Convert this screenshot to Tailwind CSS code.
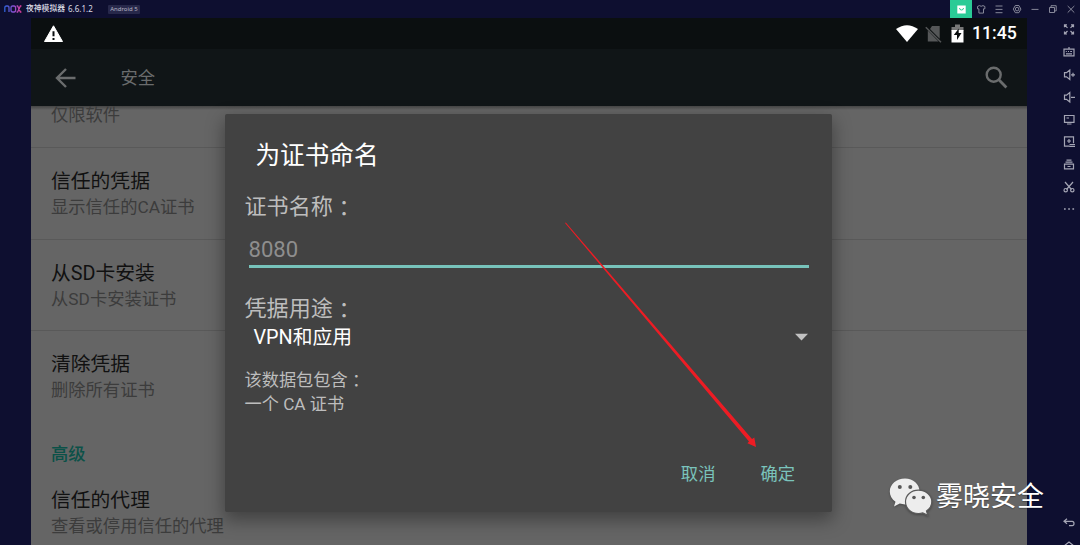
<!DOCTYPE html>
<html lang="zh-CN">
<head>
<meta charset="utf-8">
<title>安全</title>
<script src="https://cdn.jsdelivr.net/npm/@tailwindcss/browser@4"></script>
</head>
<body class="relative flex h-[545px] w-[1080px] flex-col overflow-hidden bg-[#0e0f30] font-['Roboto','Noto_Sans_CJK_SC',sans-serif]">
<header class="flex h-[18px] shrink-0 items-center text-[#9394a4]">
  <svg class="ml-[4px] h-[8px] w-[18px]" viewBox="0 0 18 8" fill="none" stroke-width="1.3"><defs><linearGradient id="n" gradientUnits="userSpaceOnUse" x1="0" y1="0" x2="18" y2="0"><stop stop-color="#2862d8"/><stop offset=".55" stop-color="#8a4fd0"/><stop offset="1" stop-color="#e83a92"/></linearGradient></defs><path stroke="url(#n)" d="M.8 7V3Q.8 1 2.500 1h1Q5 1 5 3v4M8.700 1h1.300Q11.600 1 11.600 3v2q0 2-1.600 2H8.700Q7 7 7 5V3q0-2 1.700-2zM12.600 1h1l2.800 6h1M17.400 1h-1l-2.800 6h-1"/></svg>
  <span class="ml-[4px] w-[39px] text-[7.8px] leading-[18px] font-medium whitespace-nowrap text-[#dcdce5]">夜神模拟器</span>
  <span class="ml-[3px] w-[24px] font-['Noto_Sans'] text-[8px] leading-[18px] whitespace-nowrap text-[#dcdce5]">6.6.1.2</span>
  <span class="ml-[16px] h-[9px] w-[32px] rounded-[1px] bg-[#27284a] text-center font-['Noto_Sans'] text-[6px] leading-[9px] whitespace-nowrap text-[#b5b5c5]">Android 5</span>
  <div class="ml-auto flex h-full items-center">
    <div class="flex h-full w-[22px] items-center justify-center bg-[#2acb96]"><svg class="h-[9px] w-[9px]" viewBox="0 0 9 9"><path fill="#fff" d="M.3.500h8.400v8H.3z"/><path d="M2.500 3q0 2 2 2t2-2" fill="none" stroke="#2acb96"/></svg></div>
    <svg class="h-[18px] w-[108px]" viewBox="0 0 108 18" fill="none" stroke="currentColor" stroke-width=".9">
      <path d="M7.400 5.600 5.500 6.500v2.300h1.400v4.300h4.600V8.800h1.400V6.500L11 5.600Q9.200 7 7.400 5.600z"/>
      <path d="M23.500 6h7M23.500 9.400h7M23.500 12.700h7"/>
      <path d="m43.300 5.500-2 3.600 2 3.600h3.600l2-3.600-2-3.600z"/><circle cx="45.100" cy="9.100" r="1.800"/>
      <path d="M59.500 9.400h7"/>
      <path d="M77.500 7.500h5v5h-5zM79 7.300V5.700h5.200v5.200h-1.500M95.700 6l6.600 6.600M102.300 6l-6.600 6.600"/>
    </svg>
  </div>
</header>

<div class="flex h-[527px] shrink-0">
  <main class="ml-[31px] flex w-[996px] shrink-0 flex-col overflow-hidden bg-[#656565]">
    <div class="flex h-[31px] shrink-0 items-center bg-[#0b0f10] pl-[13px]">
      <svg class="h-[18px] w-[20px]" viewBox="0 0 20 18"><path fill="#fff" stroke="#fff" stroke-linejoin="round" d="M9.500.800 18.500 16.500H.500z"/><path stroke="#0b0f10" stroke-width="2" d="M9.500 6.300v5M9.500 13v2"/></svg>
      <div class="ml-auto flex items-center pr-[10px]">
        <svg class="h-[18px] w-[22px]" viewBox="0 0 22 18"><path fill="#fff" d="M0 4Q11-3.600 22 4L11 17z"/></svg>
        <svg class="ml-[7px] h-[18px] w-[18px]" viewBox="0 0 18 18"><path fill="#555758" d="M7 1h7.700v12.700L5 4zM2.800 5.500 13.500 16.500H2.800z"/><path stroke="#555758" stroke-width="1.500" d="m.8 2.200 15.200 15"/></svg>
        <svg class="ml-[8px] h-[19px] w-[13px]" viewBox="0 0 13 19"><path fill="#777" d="M4 .500h5V3h3.500v4H.500V3H4z"/><path fill="#fff" d="M.500 6h12v12.500H.500z"/><path fill="#0b0f10" d="M7.700 4.500 2.800 11H6v5l4.500-7H7.700z"/></svg>
        <span class="ml-[8px] w-[45px] text-[17.7px] leading-[33px] font-medium whitespace-nowrap text-white">11:45</span>
      </div>
    </div>
    <div class="flex h-[57px] shrink-0 items-center bg-[#101517] pl-[24px] text-[#6a6c6d]">
      <svg class="h-[20px] w-[21px]" viewBox="0 0 21 20" fill="none" stroke="currentColor" stroke-width="2.400"><path d="M20.500 10H2M11 1 2 10l9 9"/></svg>
      <h1 class="ml-[44.5px] text-[17.3px] leading-[56px]">安全</h1>
      <svg class="mr-[19px] ml-auto h-[23px] w-[23px]" viewBox="0 0 23 23" fill="none" stroke="currentColor"><circle cx="8.700" cy="8.700" r="7" stroke-width="2.400"/><path stroke-width="2.800" d="m13.600 13.600 7.800 7.800"/></svg>
    </div>
    <div class="h-[4px] shrink-0 bg-linear-to-b from-[#454545] to-[#656565]"></div>
    <div class="-mt-[4px] h-[41px] shrink-0 pl-[20px] text-[17.3px] leading-[19px] text-[#3c3c3c]">仅限软件</div>
    <section class="h-[91.5px] shrink-0 border-t border-[#595959] pt-[21px] pl-[20px]">
      <p class="text-[19.8px] leading-[26px] text-[#111]">信任的凭据</p><p class="text-[17.3px] leading-[25px] text-[#3c3c3c]">显示信任的CA证书</p>
    </section>
    <section class="h-[91px] shrink-0 border-t border-[#595959] pt-[21px] pl-[20px]">
      <p class="text-[19.8px] leading-[26px] text-[#111]">从SD卡安装</p><p class="text-[17.3px] leading-[25px] text-[#3c3c3c]">从SD卡安装证书</p>
    </section>
    <section class="h-[111.5px] shrink-0 border-t border-[#595959] pt-[21px] pl-[20px]">
      <p class="text-[19.8px] leading-[26px] text-[#111]">清除凭据</p><p class="text-[17.3px] leading-[25px] text-[#3c3c3c]">删除所有证书</p>
    </section>
    <section class="shrink-0 pl-[20px]">
      <p class="text-[17.3px] leading-[26px] font-medium text-[#0b5148]">高级</p>
      <p class="mt-[21px] text-[19.8px] leading-[26px] text-[#111]">信任的代理</p><p class="text-[17.3px] leading-[25px] text-[#3c3c3c]">查看或停用信任的代理</p>
    </section>
  </main>

  <aside class="flex flex-1 flex-col items-end pr-[4.5px] text-[#a4a5b4]">
    <svg class="h-[527px] w-[14px]" viewBox="0 0 14 527" fill="none" stroke="currentColor" stroke-width="1.200">
      <path d="M2.500 9.300V6.800H5M2.500 6.800l3 3M9 6.800h2.500v2.500M11.500 6.800l-3 3M2.500 13.500V16H5M2.500 16l3-3M9 16h2.500v-2.500M11.500 16l-3-3"/>
      <path d="M2 31.200h10v6.700H2zM7 29v2M3.800 33.500h1M6 33.500h1M8.200 33.500h1.800M4 35.800h6"/>
      <path d="M2.500 54.700h2L7.800 52v9.500L4.500 58.800h-2zM9 56.800h4M11 54.800v4"/>
      <path d="M2.500 77.200h2L7.800 74.500v9.500L4.500 81.300h-2zM9 79.300h4"/>
      <path d="M2.500 97.500h9.500v6.800H2.500zM5 106h4.500M4.500 100H7"/>
      <path d="M7.500 128.200H2.500v-9.400H11.500v6.500M7 121v4M5 123h4M7.500 126.500h5.500M7.500 128.300h5.500"/>
      <path d="M4.500 142.200h5M3.500 144.200h7M2.500 146.200h9v4.600h-9zM5.500 148.500h3"/>
      <path d="m3 164 6.500 7.500M11 164l-6.500 7.500"/><circle cx="3.700" cy="172.200" r="1.700"/><circle cx="10.300" cy="172.200" r="1.700"/>
      <path stroke-width="1.600" d="M2 191h1.700M6.200 191h1.700M10.400 191h1.700"/>
      <path d="M5 500.800 2 503.300l3 2.500M2 503.300h8.200q1.800 0 1.800 2.200t-1.800 2.200H7"/>
      <path d="m2 528 5-4 5 4"/>
    </svg>
  </aside>
</div>

<div role="dialog" class="absolute top-[114px] left-[225px] flex h-[398px] w-[607px] flex-col rounded-[2px] bg-[#424242] pl-[19.5px] shadow-[0_7px_18px_1px_rgba(0,0,0,0.36)]">
  <h2 class="mt-[26px] ml-[11px] text-[24.6px] leading-[32px] text-white">为证书命名</h2>
  <p class="mt-[17px] text-[22.1px] leading-[30px] text-[#bdbdbd]">证书名称<span lang="zh-TW" class="inline-block translate-y-[1.5px] font-['Noto_Sans_CJK_TC']">：</span></p>
  <div class="mt-[10px] ml-[4px] h-[37px] w-[560px] border-b-[3px] border-[#77c3bb] text-[22.1px] leading-[36px] text-[#8e8e8e]">8080</div>
  <p class="mt-[23px] mb-[1px] text-[22.1px] leading-[30px] text-[#bdbdbd]">凭据用途<span lang="zh-TW" class="inline-block translate-y-[1.5px] font-['Noto_Sans_CJK_TC']">：</span></p>
  <div class="flex h-[28px] items-center pr-[24px] pl-[9px]"><span class="text-[19.8px] leading-[28px] text-white">VPN和应用</span><svg class="mb-[3px] ml-auto h-[8px] w-[13px]" viewBox="0 0 13 8"><path fill="#c2c2c2" d="M0 .800h13L6.500 7.500z"/></svg></div>
  <div class="mt-[15px] text-[17.2px] leading-[23.5px] text-[#bdbdbd]"><p>该数据包包含<span lang="zh-TW" class="inline-block translate-y-[1px] font-['Noto_Sans_CJK_TC']">：</span></p><p>一个 CA 证书</p></div>
  <div class="mt-[45px] flex justify-end gap-[45px] pr-[37px] text-[17.3px] leading-[26px] text-[#7ac4bc]"><span>取消</span><span>确定</span></div>
</div>

<svg class="absolute top-0 left-0 h-[545px] w-[1080px]" viewBox="0 0 1080 545"><path fill="#ed1c24" d="m565 223 .8-.6L752 439l2.300-1.500 1.700 9.400-8.600-3.600 1.600-1.700z"/></svg>

<div class="absolute top-[475px] left-[889px] flex h-[43px] items-center">
  <svg class="h-[40px] w-[45px] drop-shadow-[0_1px_1px_rgba(0,0,0,0.3)]" viewBox="0 0 45 40"><path fill="#ededed" d="M16 1.500C7.500 1.500.800 7.200.800 14.500c0 4.300 2.100 7.700 5.700 10.200L5 29.500l5.800-2.900q2.500.8 5.200.8c8.300 0 14.500-5.800 14.500-13S24.300 1.500 16 1.500z"/><path fill="#ededed" stroke="#5a5a5a" stroke-width="1.200" d="M29.500 13.200c-7.300 0-13 5-13 11.600s5.700 11.700 13 11.700q2.300 0 4.300-.6l5 2.500-1.300-4.500c3.300-2.100 5.300-5.300 5.300-9.100 0-6.600-6-11.600-13.300-11.600z"/><g fill="#575757"><circle cx="10.800" cy="10" r="2"/><circle cx="21.300" cy="10" r="2"/><circle cx="25" cy="20.500" r="1.800"/><circle cx="34.300" cy="20.500" r="1.800"/></g></svg>
  <span class="ml-[2px] translate-y-[1px] text-[27px] leading-[43px] whitespace-nowrap text-white [text-shadow:0_1px_1px_rgba(0,0,0,0.3)]">雾晓安全</span>
</div>
</body>
</html>
